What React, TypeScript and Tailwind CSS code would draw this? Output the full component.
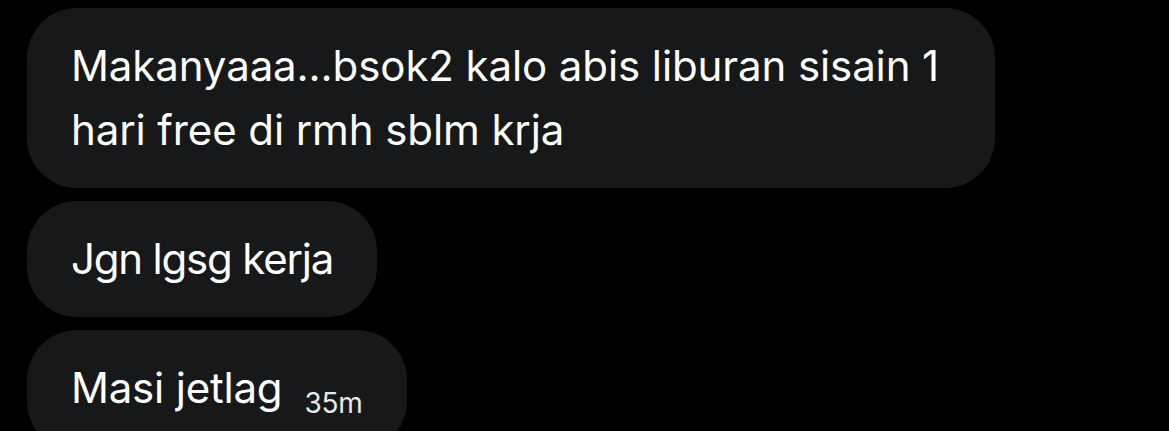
const bubble = 'bg-[#17181a] rounded-[50px] px-[44px] py-[26px] text-white text-[42px] leading-[64px]';

export default function App() {
  return (
    <div className="w-[1169px] h-[431px] overflow-hidden bg-black pl-[27px] pt-[8px] font-['Inter','Noto_Sans',sans-serif]">
      <div className="flex flex-col items-start gap-[13px]">
        <div className={`${bubble} w-[968px] tracking-[-0.1px]`}>
          Makanyaaa...bsok2 kalo abis liburan sisain 1 hari free di rmh sblm krja
        </div>
        <div className={`${bubble} tracking-[-1.2px]`}>Jgn lgsg kerja</div>
        <div className={`${bubble} flex items-baseline tracking-[-0.2px]`}>
          <span>Masi jetlag</span>
          <span className="ml-[22px] text-[28px] text-[#e7e9ea] relative top-[10px]">35m</span>
        </div>
      </div>
    </div>
  );
}
